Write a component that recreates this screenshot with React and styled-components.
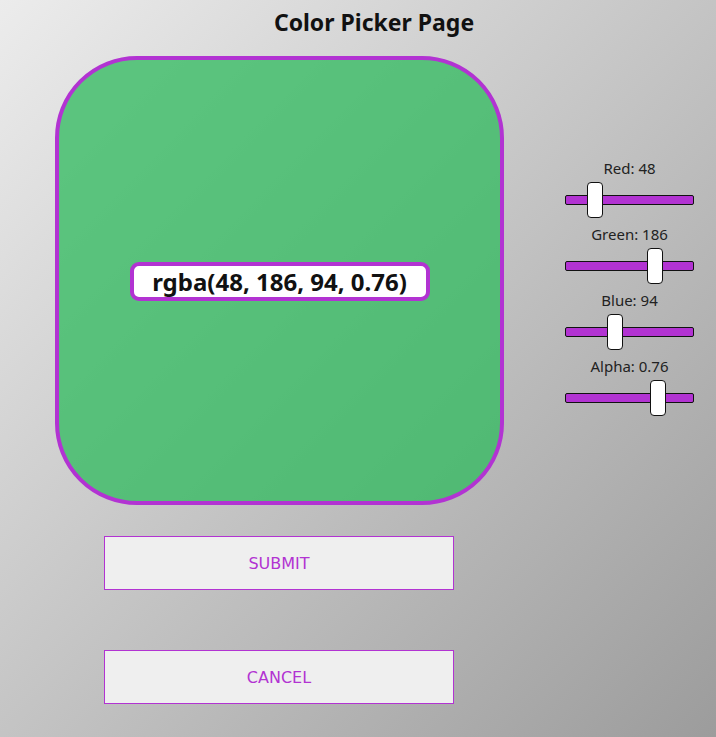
import styled, { createGlobalStyle } from "styled-components";

const Global = createGlobalStyle`
html, body {
  margin: 0;
  padding: 0;
}
body {
  min-height: 737px;
  background: linear-gradient(to bottom right, #ececec, #9c9c9c);
  font-family: "Noto Sans", "Open Sans", sans-serif;
}
`

const Page = styled.div`
display: flex;
flex-direction: column;
width: 716px;
height: 737px;
`
const Title = styled.h1`
margin: 0;
padding: 7px 0 0 32px;
text-align: center;
font-size: 23px;
font-weight: 700;
color: #111;
line-height: 30px;
`
const Row = styled.div`
display: flex;
align-items: center;
margin-top: 19px;
padding-left: 55px;
`
const Swatch = styled.div`
box-sizing: border-box;
width: 449px;
height: 449px;
border: 4px solid #b233d2;
border-radius: 82px;
background: ${p => p.color};
display: flex;
align-items: center;
justify-content: center;
`
const ColorLabel = styled.div`
box-sizing: border-box;
width: 300px;
height: 39px;
margin-top: 2px;
background: white;
border: 4px solid #b233d2;
border-radius: 9px;
display: flex;
align-items: center;
justify-content: center;
font-size: 24px;
font-weight: 700;
color: #111;
`
const Sliders = styled.div`
display: flex;
flex-direction: column;
align-items: center;
gap: 5px;
margin-left: 61px;
margin-top: 14px;
width: 129px;
`
const SliderGroup = styled.div`
display: flex;
flex-direction: column;
align-items: center;
`
const SliderLabel = styled.label`
font-size: 15px;
color: #222;
line-height: 20px;
`
const Range = styled.input`
-webkit-appearance: none;
appearance: none;
width: 129px;
height: 38px;
margin: 0;
margin-top: 3px;
background: transparent;

&::-webkit-slider-runnable-track {
  height: 10px;
  box-sizing: border-box;
  background: #b233d2;
  border: 1.5px solid #111;
  border-radius: 2px;
}
&::-webkit-slider-thumb {
  -webkit-appearance: none;
  box-sizing: border-box;
  width: 16px;
  height: 36px;
  margin-top: -14.5px;
  background: white;
  border: 1.5px solid #111;
  border-radius: 4px;
}
`
const Buttons = styled.div`
display: flex;
flex-direction: column;
gap: 60px;
margin-top: 31px;
padding-left: 104px;
`
const Button = styled.button`
box-sizing: border-box;
width: 350px;
height: 54px;
background: #efefef;
border: 1px solid #b233d2;
color: #b233d2;
font-family: "DejaVu Sans", sans-serif;
font-size: 16px;
cursor: pointer;
`

const values = { r: 48, g: 186, b: 94, a: 0.76 }

export default function App() {
    const { r, g, b, a } = values
    const rgba = `rgba(${r}, ${g}, ${b}, ${a})`

    return(
        <Page>
            <Global />
            <Title>Color Picker Page</Title>
            <Row>
                <Swatch color={rgba}>
                    <ColorLabel>{rgba}</ColorLabel>
                </Swatch>
                <Sliders>
                    <SliderGroup>
                        <SliderLabel>Red: {r}</SliderLabel>
                        <Range type="range" min="0" max="255" defaultValue={r} />
                    </SliderGroup>
                    <SliderGroup>
                        <SliderLabel>Green: {g}</SliderLabel>
                        <Range type="range" min="0" max="255" defaultValue={g} />
                    </SliderGroup>
                    <SliderGroup>
                        <SliderLabel>Blue: {b}</SliderLabel>
                        <Range type="range" min="0" max="255" defaultValue={b} />
                    </SliderGroup>
                    <SliderGroup>
                        <SliderLabel>Alpha: {a}</SliderLabel>
                        <Range type="range" min="0" max="1" step="0.01" defaultValue={a} />
                    </SliderGroup>
                </Sliders>
            </Row>
            <Buttons>
                <Button>SUBMIT</Button>
                <Button>CANCEL</Button>
            </Buttons>
        </Page>
    )
}
